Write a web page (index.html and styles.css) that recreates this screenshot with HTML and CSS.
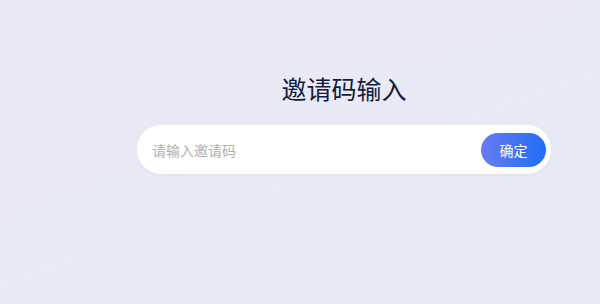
FILE: index.html
```html
<!DOCTYPE html>
<html lang="zh">
<head>
<meta charset="utf-8">
<link rel="stylesheet" href="styles.css">
</head>
<body>
<main class="page">
  <section class="invite">
    <h1 class="title">邀请码输入</h1>
    <form class="field" onsubmit="return false">
      <input class="code-input" type="text" placeholder="请输入邀请码">
      <button class="confirm" type="button">确定</button>
    </form>
  </section>
</main>
</body>
</html>
```

FILE: styles.css
```css
html, body {
  margin: 0;
  padding: 0;
}
body {
  width: 600px;
  height: 304px;
  overflow: hidden;
  background: linear-gradient(160deg, #e9e9f5 0%, #e8eaf6 55%, #e6eaf6 100%);
  font-family: "Noto Sans CJK SC", "Noto Sans", sans-serif;
}
.page {
  display: flex;
  justify-content: center;
  padding-left: 88px;
  padding-top: 70px;
  box-sizing: border-box;
  height: 304px;
}
.invite {
  width: 414px;
  display: flex;
  flex-direction: column;
  align-items: center;
}
.title {
  margin: 0 0 19px;
  font-size: 25px;
  line-height: 36px;
  font-weight: 400;
  color: #161a3c;
}
.field {
  margin: 0;
  width: 414px;
  height: 49px;
  box-sizing: border-box;
  background: #fff;
  border-radius: 25px;
  display: flex;
  align-items: center;
  padding: 0 5px 0 15px;
  box-shadow: 0 1px 3px rgba(150, 160, 200, 0.22), 0 0 0 1px rgba(255, 245, 230, 0.6);
}
.code-input {
  flex: 1;
  border: none;
  outline: none;
  background: transparent;
  font-family: inherit;
  font-size: 14px;
  color: #333;
  padding: 0;
}
.code-input::placeholder {
  color: #b0b0b0;
}
.confirm {
  width: 65px;
  height: 34px;
  border: none;
  border-radius: 17px;
  background: linear-gradient(90deg, #6a7bf1 0%, #3d73f3 60%, #1f6ef5 100%);
  color: #fff;
  font-family: inherit;
  font-size: 14px;
  padding: 0;
}
```
